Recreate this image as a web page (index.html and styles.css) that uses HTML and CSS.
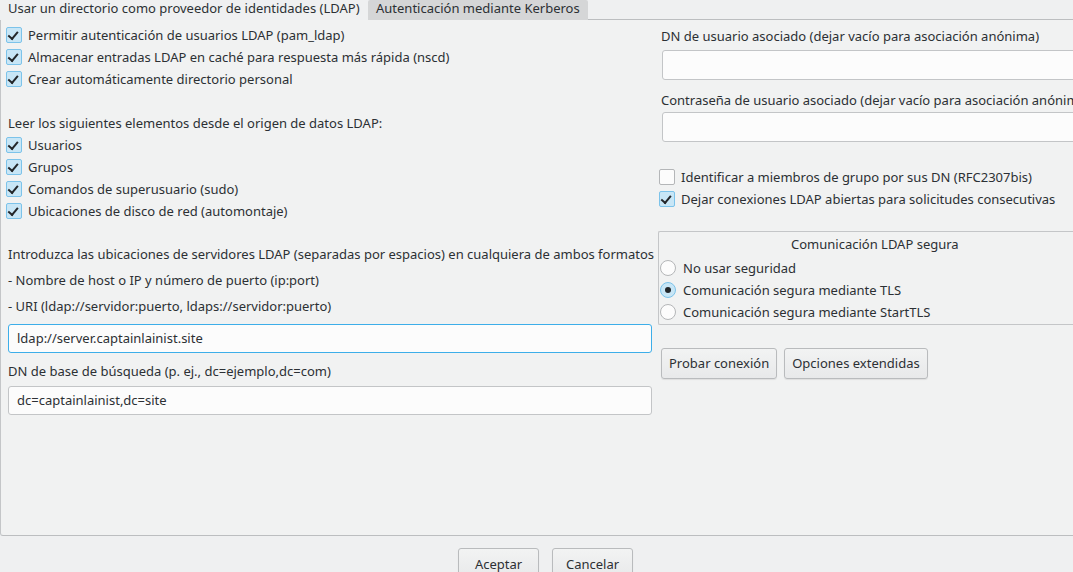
FILE: index.html
```html
<!DOCTYPE html>
<html lang="es">
<head>
<meta charset="utf-8">
<link rel="stylesheet" href="styles.css">
</head>
<body>
<div class="dialog">
  <div class="tabs">
    <div class="tab active">Usar un directorio como proveedor de identidades (LDAP)</div>
    <div class="tab">Autenticación mediante Kerberos</div>
    <div class="tab-fill"></div>
  </div>
  <div class="panel">
    <div class="col left">
      <div class="group-checks">
        <label class="check"><span class="box on"></span>Permitir autenticación de usuarios LDAP (pam_ldap)</label>
        <label class="check"><span class="box on"></span>Almacenar entradas LDAP en caché para respuesta más rápida (nscd)</label>
        <label class="check"><span class="box on"></span>Crear automáticamente directorio personal</label>
      </div>
      <div class="lead">Leer los siguientes elementos desde el origen de datos LDAP:</div>
      <div class="group-checks">
        <label class="check"><span class="box on"></span>Usuarios</label>
        <label class="check"><span class="box on"></span>Grupos</label>
        <label class="check"><span class="box on"></span>Comandos de superusuario (sudo)</label>
        <label class="check"><span class="box on"></span>Ubicaciones de disco de red (automontaje)</label>
      </div>
      <div class="info">
        <div class="line">Introduzca las ubicaciones de servidores LDAP (separadas por espacios) en cualquiera de ambos formatos</div>
        <div class="line">- Nombre de host o IP y número de puerto (ip:port)</div>
        <div class="line">- URI (ldap://servidor:puerto, ldaps://servidor:puerto)</div>
      </div>
      <div class="field focus">ldap://server.captainlainist.site</div>
      <div class="label base">DN de base de búsqueda (p. ej., dc=ejemplo,dc=com)</div>
      <div class="field">dc=captainlainist,dc=site</div>
    </div>
    <div class="col right">
      <div class="label r1">DN de usuario asociado (dejar vacío para asociación anónima)</div>
      <div class="field wide"></div>
      <div class="label r2">Contraseña de usuario asociado (dejar vacío para asociación anónima)</div>
      <div class="field wide"></div>
      <div class="group-checks rchecks">
        <label class="check"><span class="box"></span>Identificar a miembros de grupo por sus DN (RFC2307bis)</label>
        <label class="check"><span class="box on"></span>Dejar conexiones LDAP abiertas para solicitudes consecutivas</label>
      </div>
      <div class="groupbox">
        <div class="gtitle">Comunicación LDAP segura</div>
        <label class="radio"><span class="circle"></span>No usar seguridad</label>
        <label class="radio"><span class="circle on"></span>Comunicación segura mediante TLS</label>
        <label class="radio"><span class="circle"></span>Comunicación segura mediante StartTLS</label>
      </div>
      <div class="buttons">
        <div class="btn">Probar conexión</div>
        <div class="btn">Opciones extendidas</div>
      </div>
    </div>
  </div>
  <div class="footer">
    <div class="btn foot">Aceptar</div>
    <div class="btn foot">Cancelar</div>
  </div>
</div>
</body>
</html>
```

FILE: styles.css
```css
html, body {
  margin: 0;
  padding: 0;
  background: #eff0f1;
  overflow: hidden;
}
body {
  font-family: "Noto Sans", "DejaVu Sans", sans-serif;
  font-size: 13px;
  color: #2c3034;
  width: 1073px;
  height: 572px;
}
.dialog {
  width: 1120px;
}
.tabs {
  display: flex;
  height: 20px;
}
.tab {
  height: 20px;
  line-height: 16px;
  padding: 0 8px;
  white-space: nowrap;
  box-sizing: border-box;
}
.tab.active {
  width: 368px;
  background: #eff0f1;
}
.tab:not(.active) {
  width: 220px;
  background: #d5d6d7;
  border-top-right-radius: 2px;
  border-top-left-radius: 2px;
}
.tab-fill {
  flex: 1;
  border-bottom: 1px solid #bcbec0;
  box-sizing: border-box;
}
.panel {
  height: 516px;
  box-sizing: border-box;
  border-left: 1px solid #c4c6c8;
  border-bottom: 1px solid #bcbec0;
  border-bottom-left-radius: 3px;
  background: #f1f2f2;
  display: flex;
  gap: 9px;
  padding: 4px 0 0 5px;
}
.col {
  display: flex;
  flex-direction: column;
}
.left {
  width: 646px;
  flex: none;
}
.right {
  flex: 1;
  padding-top: 1px;
}
.group-checks {
  display: flex;
  flex-direction: column;
}
.check, .radio {
  display: flex;
  align-items: center;
  gap: 6px;
  height: 22px;
  white-space: nowrap;
}
.box {
  width: 14px;
  height: 14px;
  border: 1px solid #b4b6b8;
  border-radius: 2px;
  background: #fcfcfc;
  flex: none;
  position: relative;
}
.box.on {
  background: #c8e6f6;
  border-color: #7cc3ea;
}
.box.on::after {
  content: "";
  position: absolute;
  left: 3px;
  top: 0px;
  width: 4px;
  height: 8px;
  border-right: 2px solid #232629;
  border-bottom: 2px solid #232629;
  transform: rotate(40deg) translate(1px, 1px);
}
.left .check {
  margin-left: 0;
}
.lead {
  margin-top: 22px;
  padding-left: 2px;
  height: 22px;
  line-height: 22px;
}
.info {
  margin-top: 19px;
  padding-left: 2px;
}
.info .line {
  height: 26px;
  line-height: 26px;
  white-space: nowrap;
}
.field {
  height: 29px;
  box-sizing: border-box;
  border: 1px solid #c3c5c7;
  border-radius: 3px;
  background: #fcfcfc;
  padding: 0 8px;
  line-height: 27px;
  margin-left: 2px;
  white-space: nowrap;
}
.field.focus {
  margin-top: 5px;
  border-color: #3daee9;
}
.label {
  white-space: nowrap;
}
.left .label.base {
  height: 33px;
  line-height: 37px;
  padding-left: 2px;
}
.field.wide {
  height: 30px;
  margin-left: 1px;
}
.right .label.r1 {
  height: 25px;
  line-height: 22px;
}
.right .label.r2 {
  height: 32px;
  line-height: 40px;
}
.rchecks {
  margin-top: 24px;
  margin-left: -2px;
}
.groupbox {
  margin-top: 21px;
  margin-left: -3px;
  border: 1px solid #c4c6c8;
  border-right: none;
  border-radius: 2px 0 0 2px;
  height: 94px;
  box-sizing: border-box;
  padding: 3px 0 0 1px;
}
.gtitle {
  padding-left: 131px;
  height: 22px;
  line-height: 19px;
}
.radio {
  gap: 7px;
}
.circle {
  width: 16px;
  height: 16px;
  box-sizing: border-box;
  border-radius: 50%;
  border: 1px solid #b4b6b8;
  background: #fcfcfc;
  flex: none;
  position: relative;
}
.circle.on {
  background: #c8e6f6;
  border-color: #7cc3ea;
}
.circle.on::after {
  content: "";
  position: absolute;
  left: 4px;
  top: 4px;
  width: 6px;
  height: 6px;
  border-radius: 50%;
  background: #232629;
}
.buttons {
  display: flex;
  gap: 7px;
  margin-top: 23px;
  margin-left: 0;
}
.btn {
  height: 31px;
  box-sizing: border-box;
  border: 1px solid #b9bbbd;
  border-radius: 3px;
  background: linear-gradient(#f2f3f3, #e8e9ea);
  padding: 0 7px;
  line-height: 29px;
  white-space: nowrap;
  box-shadow: 0 1px 1px rgba(0,0,0,0.08);
}
.footer {
  display: flex;
  gap: 13px;
  padding: 12px 0 0 458px;
}
.btn.foot {
  width: 81px;
  text-align: center;
  padding: 0;
  line-height: 31px;
}
```
